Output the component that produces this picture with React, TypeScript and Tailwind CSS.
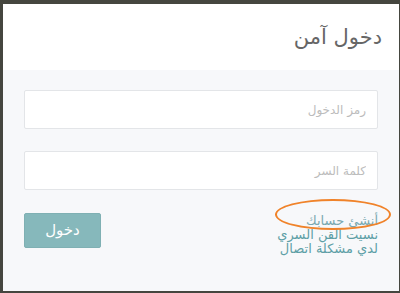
import React from "react";

export default function App() {
  return (
    <div
      className="w-[400px] h-[293px] bg-[#45463f] pl-[3px] pt-[4px] pr-[1px] pb-[2px]"
      style={{ fontFamily: '"DejaVu Sans", sans-serif' }}
    >
      <div dir="rtl" className="h-full bg-[#f7f8fa] flex flex-col">
        <div className="h-[66px] bg-white flex items-center pr-[17px] shrink-0">
          <h1 className="text-[21px] text-[#666] font-normal leading-none">دخول آمن</h1>
        </div>
        <div className="px-[21px] pt-[20px] flex flex-col">
          <input
            placeholder="رمز الدخول"
            className="h-[39px] w-full bg-white border border-[#e3e5e8] rounded-[2px] px-[11px] text-[12px] placeholder:text-[#bcbcbc] outline-none"
          />
          <input
            placeholder="كلمة السر"
            className="mt-[22px] h-[39px] w-full bg-white border border-[#e3e5e8] rounded-[2px] px-[11px] text-[12px] placeholder:text-[#bcbcbc] outline-none"
          />
          <div className="mt-[23px] flex justify-between items-start">
            <div className="relative flex flex-col pt-[1px] text-[13px] leading-[14px] text-[#5d9fa6]">
              <span className="absolute left-[-2px] right-[-13px] top-[-14px] h-[31px] rounded-[50%] border-2 border-[#f0832a]" />
              <a className="text-[#7aa8b0]">أنشئ حسابك</a>
              <a>نسيت القن السري</a>
              <a>لدي مشكلة اتصال</a>
            </div>
            <button className="w-[77px] h-[35px] bg-[#86b8bb] border border-[#7fb0b3] rounded-[2px] text-white text-[15px]">
              دخول
            </button>
          </div>
        </div>
      </div>
    </div>
  );
}
